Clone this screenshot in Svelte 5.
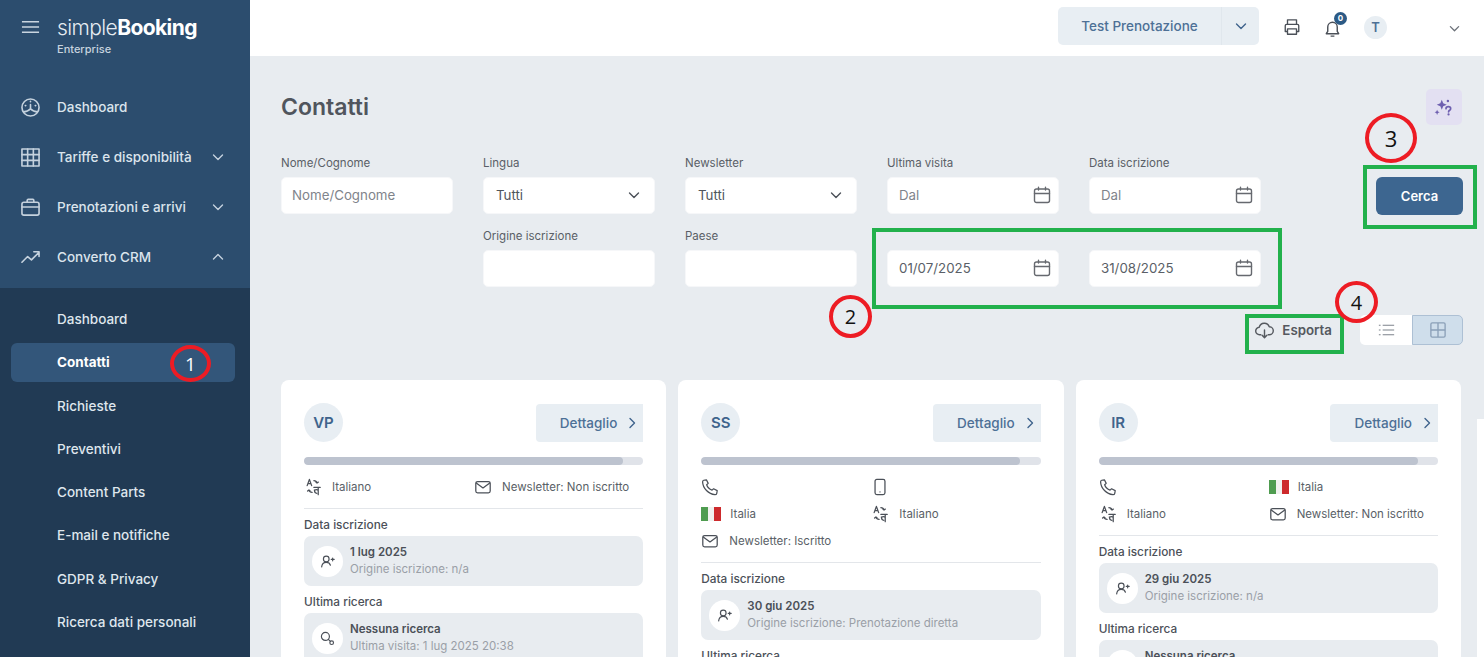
<script>
  const mainNav = [
    { label: 'Dashboard', icon: 'gauge' },
    { label: 'Tariffe e disponibilità', icon: 'grid', chevron: 'down' },
    { label: 'Prenotazioni e arrivi', icon: 'case', chevron: 'down' },
    { label: 'Converto CRM', icon: 'trend', chevron: 'up' }
  ];
  const subNav = ['Dashboard', 'Contatti', 'Richieste', 'Preventivi', 'Content Parts', 'E-mail e notifiche', 'GDPR & Privacy', 'Ricerca dati personali'];

  const cards = [
    {
      initials: 'VP',
      info: [{ icon: 'lang', text: 'Italiano' }, { icon: 'mail', text: 'Newsletter: Non iscritto' }],
      date: '1 lug 2025', origin: 'Origine iscrizione: n/a',
      visit: 'Ultima visita: 1 lug 2025 20:38'
    },
    {
      initials: 'SS',
      info: [
        { icon: 'phone', text: '' }, { icon: 'mobile', text: '' },
        { icon: 'flag', text: 'Italia' }, { icon: 'lang', text: 'Italiano' },
        { icon: 'mail', text: 'Newsletter: Iscritto' }
      ],
      date: '30 giu 2025', origin: 'Origine iscrizione: Prenotazione diretta',
      visit: ''
    },
    {
      initials: 'IR',
      info: [
        { icon: 'phone', text: '' }, { icon: 'flag', text: 'Italia' },
        { icon: 'lang', text: 'Italiano' }, { icon: 'mail', text: 'Newsletter: Non iscritto' }
      ],
      date: '29 giu 2025', origin: 'Origine iscrizione: n/a',
      visit: 'Ultima visita'
    }
  ];
</script>

{#snippet chevron(dir, cls)}
  <svg class={cls} viewBox="0 0 12 12" fill="none" stroke="currentColor" stroke-width="1.4" stroke-linecap="round" stroke-linejoin="round">
    {#if dir === 'down'}<path d="M1.5 4l4.5 4.5L10.5 4" />
    {:else if dir === 'up'}<path d="M1.5 8L6 3.5 10.5 8" />
    {:else}<path d="M4 1.5L8.5 6 4 10.5" />{/if}
  </svg>
{/snippet}

{#snippet navIcon(name)}
  <svg class="nav-icon" viewBox="0 0 20 20" fill="none" stroke="currentColor" stroke-width="1.7" stroke-linecap="round" stroke-linejoin="round">
    {#if name === 'gauge'}
      <circle cx="10" cy="10" r="9" /><path d="M10 11.500V7M10 3.500v.5M4.500 8h.5M15 8h.5M2.500 14.500c3.500 0 5.500-1 7.500-3 2 2 4 3 7.500 3" />
    {:else if name === 'grid'}
      <rect x="1" y="1" width="18" height="18" /><path d="M7 1v18M13 1v18M1 7h18M1 13h18" />
    {:else if name === 'case'}
      <rect x="1" y="4.500" width="18" height="13.500" rx="2" /><path d="M6.500 4.500V2.500a1 1 0 011-1h5a1 1 0 011 1v2M1 9.500h18" />
    {:else}
      <path d="M1 15l6-6 4 3.500L19 4.500M13.500 4H19v5" />
    {/if}
  </svg>
{/snippet}

{#snippet calendar()}
  <svg class="cal" viewBox="0 0 18 18" fill="none" stroke="currentColor" stroke-width="1.4" stroke-linecap="round">
    <rect x="1.500" y="3" width="15" height="13.500" rx="2" /><path d="M1.500 7.500h15M5.500 1.200V4M12.500 1.200V4" />
  </svg>
{/snippet}

{#snippet infoIcon(name)}
  {#if name === 'flag'}
    <span class="flag"></span>
  {:else}
    <svg class="info-icon" viewBox="0 0 20 20" fill="none" stroke="currentColor" stroke-width="1.400" stroke-linecap="round" stroke-linejoin="round">
      {#if name === 'mail'}
        <rect x="2" y="4" width="16" height="12.500" rx="2" /><path d="M2.500 5.500L10 11l7.500-5.500" />
      {:else if name === 'phone'}
        <path d="M3 2.500L6 2l2 4-1.700 1.500c.8 2.500 3.200 5 6 6L14 12l4 2-.5 3c-.2 1-1 1.500-2 1.500C8.500 18 2 11.500 1.800 4.500c0-1 .4-1.800 1.200-2z" />
      {:else if name === 'mobile'}
        <rect x="4.500" y="1.500" width="11" height="17" rx="2" /><path d="M10 15.500h.01" />
      {:else}
        <path d="M3.500 8.500L6 1.500l2.500 7M4.500 6.200h3M11 3c2 0 3 .8 3.500 2.500M13.200 4.500l1.300 1.200L16 4.500M9 16c-2 0-3-.8-3.500-2.500M6.800 14.500l-1.300-1.200L4 14.500M11 10.500h7M15.800 10.500v8M11.500 13.500c1.500-.8 3.300-.8 4.300 0M11.700 14c0 2 .9 3 2.500 3" />
      {/if}
    </svg>
  {/if}
{/snippet}

{#snippet eventBox(kind, title, sub)}
  <div class="event">
    <span class="event-icon">
      <svg viewBox="0 0 18 18" fill="none" stroke="#4b5058" stroke-width="1.400" stroke-linecap="round" stroke-linejoin="round">
        {#if kind === 'user'}
          <circle cx="7.500" cy="6" r="3.400" /><path d="M2 15.500c.3-3.500 2.500-5.500 5.500-5.500s4.500 1.500 5 3.500M13.500 6.500h3.500M15.200 4.800v3.400" />
        {:else}
          <circle cx="6.500" cy="6.500" r="4.800" /><path d="M10 10l2.500 2.500" /><circle cx="14" cy="14" r="2.200" />
        {/if}
      </svg>
    </span>
    <div class="event-text">
      <strong>{title}</strong>
      <span>{sub}</span>
    </div>
  </div>
{/snippet}

<div class="page">
  <aside class="sidebar">
    <div class="brand">
      <svg class="burger" viewBox="0 0 20 14" fill="none" stroke="currentColor" stroke-width="1.500"><path d="M1 1.500h18M1 7h18M1 12.500h18" /></svg>
      <div>
        <div class="logo">simple<b>Booking</b></div>
        <div class="edition">Enterprise</div>
      </div>
    </div>
    <nav class="main-nav">
      {#each mainNav as item}
        <div class="nav-item">
          {@render navIcon(item.icon)}
          <span>{item.label}</span>
          {#if item.chevron}{@render chevron(item.chevron, 'nav-chevron')}{/if}
        </div>
      {/each}
    </nav>
    <nav class="sub-nav">
      {#each subNav as label}
        <div class="sub-item" class:active={label === 'Contatti'}>{label}</div>
      {/each}
    </nav>
  </aside>

  <div class="content">
    <header class="topbar">
      <div class="property">
        <span>Test Prenotazione</span>
        <div class="property-toggle">{@render chevron('down', 'property-chevron')}</div>
      </div>
      <svg class="print" viewBox="0 0 20 20" fill="none" stroke="#4b5058" stroke-width="1.500" stroke-linejoin="round">
        <path d="M5 7V2h10v5M5 15H2.500V8.500A1.500 1.500 0 014 7h12a1.500 1.500 0 011.500 1.500V15H15" /><rect x="5" y="12" width="10" height="6" />
      </svg>
      <div class="bell">
        <svg viewBox="0 0 20 20" fill="none" stroke="#4b5058" stroke-width="1.500" stroke-linejoin="round">
          <path d="M5 13V8.500a5 5 0 0110 0V13l1.500 2.500h-13zM8 18h4" />
        </svg>
        <span class="badge">0</span>
      </div>
      <span class="user">T</span>
      {@render chevron('down', 'user-chevron')}
    </header>

    <main class="main">
      <div class="title-row">
        <h1>Contatti</h1>
        <button class="help" aria-label="Aiuto">
          <svg viewBox="0 0 18 18" fill="#6e5fb0"><path d="M7 2.500l1.300 3.200 3.200 1.300-3.200 1.300L7 11.500 5.700 8.300 2.500 7l3.200-1.300zM2.800 11.500l.7 1.600 1.600.7-1.600.7-.7 1.600-.7-1.600-1.600-.7 1.600-.7zM12.500 2.500a1.100 1.100 0 110 2.200 1.100 1.100 0 010-2.200z" /><path d="M10.800 10.500c0-1.100.9-1.800 2.100-1.800s2.100.7 2.100 1.800c0 1.400-1.900 1.500-1.900 2.900" fill="none" stroke="#6e5fb0" stroke-width="1.500" stroke-linecap="round" /><circle cx="13.100" cy="15.700" r="1" /></svg>
        </button>
      </div>

      <div class="filter-row">
        <div class="filters">
          <div class="field">
            <label for="nome">Nome/Cognome</label>
            <input id="nome" placeholder="Nome/Cognome" />
          </div>
          <div class="field">
            <span class="lbl">Lingua</span>
            <div class="box value">Tutti {@render chevron('down', 'select-chevron')}</div>
          </div>
          <div class="field">
            <span class="lbl">Newsletter</span>
            <div class="box value">Tutti {@render chevron('down', 'select-chevron')}</div>
          </div>
          <div class="field">
            <span class="lbl">Ultima visita</span>
            <div class="box date placeholder">Dal {@render calendar()}</div>
          </div>
          <div class="field">
            <span class="lbl">Data iscrizione</span>
            <div class="box date placeholder">Dal {@render calendar()}</div>
          </div>
          <div class="field second">
            <span class="lbl">Origine iscrizione</span>
            <div class="box"></div>
          </div>
          <div class="field">
            <span class="lbl">Paese</span>
            <div class="box"></div>
          </div>
          <div class="field">
            <span class="lbl"></span>
            <div class="box date">01/07/2025 {@render calendar()}</div>
          </div>
          <div class="field">
            <span class="lbl"></span>
            <div class="box date">31/08/2025 {@render calendar()}</div>
          </div>
        </div>
        <button class="search">Cerca</button>
      </div>

      <div class="toolbar">
        <button class="export">
          <svg viewBox="0 0 20 20" fill="none" stroke="#55595f" stroke-width="1.500" stroke-linecap="round" stroke-linejoin="round">
            <path d="M6 14.500H5a4 4 0 01-.5-8A5.500 5.500 0 0115 6a4.200 4.200 0 010 8.500h-1M10 9.500v8M7.500 15l2.500 2.500 2.500-2.500" />
          </svg>
          Esporta
        </button>
        <div class="views">
          <span class="view">
            <svg viewBox="0 0 20 14" fill="none" stroke="#7d838c" stroke-width="1.200"><path d="M5.500 1.500H19M5.500 7H19M5.500 12.500H19M1 1.500h2M1 7h2M1 12.500h2" /></svg>
          </span>
          <span class="view on">
            <svg viewBox="0 0 18 18" fill="none" stroke="#8ba0b8" stroke-width="1.500"><rect x="1" y="1" width="16" height="16" rx="1.500" /><path d="M9 1v16M1 9h16" /></svg>
          </span>
        </div>
      </div>

      <section class="cards">
        {#each cards as card}
          <article class="card">
            <div class="card-head">
              <span class="avatar">{card.initials}</span>
              <button class="detail">Dettaglio {@render chevron('right', 'detail-chevron')}</button>
            </div>
            <div class="progress"><div class="progress-fill" style="width: 94%"></div></div>
            <div class="info">
              {#each card.info as row}
                <div class="info-row">
                  {@render infoIcon(row.icon)}
                  {#if row.text}<span>{row.text}</span>{/if}
                </div>
              {/each}
            </div>
            <div class="section-label">Data iscrizione</div>
            {@render eventBox('user', card.date, card.origin)}
            <div class="section-label">Ultima ricerca</div>
            {@render eventBox('key', 'Nessuna ricerca', card.visit)}
          </article>
        {/each}
      </section>
    </main>
  </div>

  <!-- annotations drawn over the screenshot -->
  <div class="mark green g2"></div>
  <div class="mark green g3"></div>
  <div class="mark green g4"></div>
  <div class="mark red r1">1</div>
  <div class="mark red r2">2</div>
  <div class="mark red r3">3</div>
  <div class="mark red r4">4</div>
  <div class="edge-patch"></div>
</div>

<style>
  :global(body) {
    margin: 0;
    overflow: hidden;
    font-family: Inter, "Liberation Sans", sans-serif;
  }
  .page {
    position: relative;
    display: flex;
    width: 1484px;
    height: 657px;
    overflow: hidden;
    background: #e8ecf0;
    color: #4b5058;
  }

  /* sidebar */
  .sidebar {
    flex: 0 0 250px;
    display: flex;
    flex-direction: column;
    background: #2c4d6e;
    color: #dbe4ec;
  }
  .brand {
    display: flex;
    gap: 17px;
    height: 82px;
    padding: 15px 0 0 21px;
    box-sizing: border-box;
  }
  .burger {
    width: 19px;
    height: 14px;
    margin-top: 5px;
    color: #c9d5e0;
  }
  .logo {
    font-size: 21px;
    line-height: 25px;
    font-weight: 300;
    letter-spacing: -0.6px;
    color: #e6ecf2;
  }
  .logo b {
    font-weight: 700;
    color: #fff;
  }
  .edition {
    font-size: 11px;
    font-weight: 500;
    line-height: 14px;
    margin-top: 2px;
    color: #c7d3df;
  }
  .main-nav {
    height: 206px;
  }
  .nav-item {
    display: flex;
    align-items: center;
    height: 50px;
    padding: 0 26px 0 21px;
    font-size: 13.500px;
    font-weight: 500;
  }
  .nav-icon {
    flex: none;
    width: 19px;
    height: 19px;
    margin-right: 17px;
    color: #c5d2de;
  }
  :global(.nav-chevron) {
    width: 12px;
    height: 12px;
    margin-left: auto;
    color: #c5d2de;
  }
  .sub-nav {
    flex: 1;
    padding-top: 11.500px;
    background: #213a54;
  }
  .sub-item {
    display: flex;
    align-items: center;
    height: 39px;
    margin: 0 15px 4.300px 11px;
    padding-left: 46px;
    border-radius: 6px;
    font-size: 13.500px;
    font-weight: 500;
    color: #dfe6ed;
  }
  .sub-item.active {
    background: #33567a;
    font-weight: 700;
    color: #fff;
  }

  /* top bar */
  .content {
    flex: 1;
    min-width: 0;
  }
  .topbar {
    display: flex;
    align-items: center;
    height: 56px;
    padding: 0 24px 0 808px;
    box-sizing: border-box;
    background: #fff;
  }
  .property {
    display: flex;
    align-items: center;
    width: 201px;
    height: 38px;
    margin-top: -4px;
    border-radius: 5px;
    background: #e8eef3;
    color: #4d7096;
    font-size: 13.500px;
    font-weight: 500;
    line-height: 40px;
  }
  .property > span {
    flex: 1;
    text-align: center;
  }
  .property-toggle {
    display: flex;
    align-items: center;
    justify-content: center;
    width: 37px;
    height: 100%;
    border-left: 1px solid #e0e7ed;
  }
  :global(.property-chevron) {
    width: 12px;
    height: 12px;
    color: #3f648c;
  }
  .print {
    width: 18px;
    height: 18px;
    margin: -2px 0 0 24px;
  }
  .bell {
    position: relative;
    width: 19px;
    height: 19px;
    margin: 0 0 0 22px;
  }
  .bell svg {
    width: 19px;
    height: 19px;
  }
  .badge {
    position: absolute;
    top: -7px;
    right: -5px;
    width: 13px;
    height: 13px;
    border-radius: 50%;
    background: #2c5a85;
    color: #fff;
    font-size: 8px;
    font-weight: 700;
    line-height: 13px;
    text-align: center;
  }
  .user {
    width: 23px;
    height: 23px;
    margin: -2px 0 0 22px;
    border-radius: 50%;
    background: #e8eef3;
    color: #4d7096;
    font-size: 13px;
    font-weight: 600;
    line-height: 23px;
    text-align: center;
  }
  :global(.user-chevron) {
    width: 11px;
    height: 11px;
    margin: 0 0 0 auto;
    color: #6b7078;
  }

  /* page head + filters */
  .main {
    padding: 33px 21px 0 31px;
  }
  .title-row {
    display: flex;
    align-items: center;
    justify-content: space-between;
    height: 36px;
    padding-right: 1px;
  }
  h1 {
    margin: 0;
    font-size: 23px;
    font-weight: 600;
    color: #50555d;
  }
  .help {
    width: 36px;
    height: 36px;
    padding: 8px;
    border: none;
    border-radius: 5px;
    background: #e3e0f2;
  }
  .help svg {
    display: block;
  }
  .filter-row {
    display: flex;
    justify-content: space-between;
    margin-top: 30px;
  }
  .filters {
    display: grid;
    grid-template-columns: repeat(5, 172px);
    column-gap: 30px;
    row-gap: 14px;
  }
  .field.second {
    grid-column: 2;
  }
  .field label,
  .lbl {
    display: block;
    height: 22px;
    padding-top: 1px;
    box-sizing: border-box;
    font-size: 11.500px;
    line-height: 14px;
    color: #5a5f67;
  }
  input,
  .box {
    display: flex;
    align-items: center;
    justify-content: space-between;
    width: 100%;
    height: 37px;
    padding: 0 10px 1px;
    box-sizing: border-box;
    border: 1px solid #f6f7f9;
    border-radius: 5px;
    background: #fff;
    font-family: inherit;
    font-size: 13.300px;
    color: #5a5f67;
  }
  input::placeholder,
  .placeholder {
    color: #7f848b;
    opacity: 1;
  }
  .value {
    padding: 0 14px 1px 12px;
    color: #50555d;
  }
  .date {
    padding: 0 7px 1px 11px;
  }
  :global(.select-chevron) {
    width: 12px;
    height: 12px;
    color: #4b5058;
  }
  :global(.cal) {
    width: 18px;
    height: 18px;
    color: #66696f;
  }
  .search {
    width: 87px;
    height: 38px;
    margin-top: 22px;
    border: none;
    border-radius: 6px;
    background: #3d6690;
    color: #fff;
    font-family: inherit;
    font-size: 13px;
    font-weight: 600;
  }

  /* toolbar */
  .toolbar {
    display: flex;
    align-items: center;
    justify-content: flex-end;
    gap: 28px;
    height: 30px;
    margin-top: 28px;
  }
  .export {
    display: flex;
    align-items: center;
    gap: 8px;
    padding: 0;
    border: none;
    background: none;
    color: #55595f;
    font-family: inherit;
    font-size: 13.300px;
    font-weight: 600;
  }
  .export svg {
    width: 19px;
    height: 19px;
  }
  .views {
    display: flex;
    height: 30px;
  }
  .view {
    display: flex;
    align-items: center;
    justify-content: center;
    width: 52px;
    background: #fff;
    border-radius: 5px 0 0 5px;
  }
  .view svg {
    width: 17px;
    height: 12px;
  }
  .view.on {
    width: 51px;
    box-sizing: border-box;
    border: 1px solid #adc0d4;
    border-radius: 0 5px 5px 0;
    background: #cfdeeb;
  }
  .view.on svg {
    width: 16px;
    height: 16px;
  }

  /* cards */
  .cards {
    display: grid;
    grid-template-columns: repeat(3, 1fr);
    gap: 12px;
    width: 1180px;
    margin-top: 35px;
  }
  .card {
    padding: 23px;
    height: 330px;
    border-radius: 8px;
    background: #fff;
  }
  .card-head {
    display: flex;
    align-items: center;
    justify-content: space-between;
    height: 39px;
  }
  .avatar {
    width: 39px;
    height: 39px;
    border-radius: 50%;
    background: #e8eef3;
    color: #3f648c;
    font-size: 15px;
    font-weight: 600;
    line-height: 39px;
    text-align: center;
  }
  .detail {
    display: flex;
    align-items: center;
    gap: 9px;
    height: 38px;
    padding: 0 5px 0 24px;
    border: none;
    border-radius: 4px 0 0 4px;
    background: #e8eef3;
    color: #4d7096;
    font-family: inherit;
    font-size: 13.500px;
    font-weight: 500;
  }
  :global(.detail-chevron) {
    width: 12px;
    height: 12px;
    color: #3f648c;
  }
  .progress {
    height: 8px;
    margin-top: 15px;
    border-radius: 4px;
    background: #e0e3e9;
    overflow: hidden;
  }
  .progress-fill {
    height: 100%;
    border-radius: 4px;
    background: #bdc3cf;
  }
  .info {
    display: grid;
    grid-template-columns: 170px 1fr;
    margin-top: 8px;
    padding-bottom: 8px;
    border-bottom: 1px solid #e3e6ea;
  }
  .info-row {
    display: flex;
    align-items: center;
    gap: 8px;
    height: 27px;
    font-size: 11.500px;
    color: #5a5f67;
  }
  .info-icon {
    flex: none;
    width: 18px;
    height: 18px;
    margin-right: 2px;
    color: #4b5058;
  }
  .flag {
    flex: none;
    width: 20px;
    height: 14px;
    margin-right: 1px;
    background: linear-gradient(90deg, #4f9c50 33%, #f1f1ef 33% 66%, #cd2a2c 66%);
  }
  .section-label {
    margin: 9px 0 4px;
    font-size: 11.800px;
    font-weight: 500;
    line-height: 14px;
    color: #4b5058;
  }
  .event {
    display: flex;
    align-items: center;
    gap: 7px;
    height: 50px;
    padding: 0 8px;
    box-sizing: border-box;
    border-radius: 7px;
    background: #e8ecf0;
  }
  .event-icon {
    display: flex;
    align-items: center;
    justify-content: center;
    width: 31px;
    height: 31px;
    border-radius: 50%;
    background: #fff;
  }
  .event-icon svg {
    width: 15px;
    height: 15px;
  }
  .event-text {
    display: flex;
    flex-direction: column;
    gap: 3px;
    padding-bottom: 2px;
    font-size: 11.500px;
    line-height: 14px;
  }
  .event-text strong {
    font-weight: 600;
    color: #4b5058;
  }
  .event-text span {
    color: #9a9fa7;
  }

  /* annotations */
  .mark {
    position: absolute;
    box-sizing: border-box;
  }
  .green {
    border: 4px solid #22b14c;
  }
  .g2 { left: 872px; top: 228px; width: 410px; height: 81px; }
  .g3 { left: 1363px; top: 165px; width: 114px; height: 64px; }
  .g4 { left: 1245px; top: 314px; width: 99px; height: 40px; }
  .red {
    display: flex;
    align-items: center;
    justify-content: center;
    border: 4.500px solid #ed1c24;
    border-radius: 50%;
    color: #111;
    font-family: "Open Sans", sans-serif;
    font-size: 20px;
  }
  .r1 { left: 170px; top: 345px; width: 41px; height: 37px; color: #fff; font-size: 19px; }
  .r2 { left: 829px; top: 295px; width: 43px; height: 43px; }
  .r3 { left: 1365px; top: 113px; width: 52px; height: 50px; font-size: 22px; }
  .r4 { left: 1335px; top: 281px; width: 43px; height: 42px; }
  .edge-patch {
    position: absolute;
    right: 0;
    top: 419px;
    bottom: 0;
    width: 7px;
    background: #fff;
  }
</style>
